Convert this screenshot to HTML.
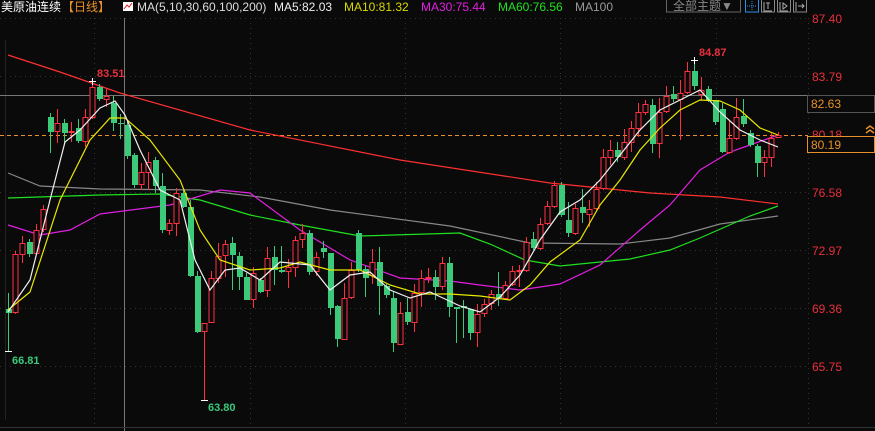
<!DOCTYPE html>
<html><head><meta charset="utf-8"><style>
html,body{margin:0;padding:0;background:#0a0a0a;width:875px;height:431px;overflow:hidden}
svg{display:block}
text{font-family:"Liberation Sans","Noto Sans CJK SC",sans-serif}
</style></head><body>
<svg id="s" width="875" height="431" xmlns="http://www.w3.org/2000/svg">
<rect width="875" height="431" fill="#0a0a0a"/>
<g stroke="#333" stroke-dasharray="1,4" stroke-width="1">
<line x1="0" y1="18.5" x2="808" y2="18.5"/><line x1="0" y1="76.5" x2="808" y2="76.5"/>
<line x1="0" y1="192.5" x2="808" y2="192.5"/><line x1="0" y1="250.5" x2="808" y2="250.5"/>
<line x1="0" y1="308.5" x2="808" y2="308.5"/><line x1="0" y1="366.5" x2="808" y2="366.5"/>
<line x1="94.5" y1="18" x2="94.5" y2="427"/><line x1="250.5" y1="18" x2="250.5" y2="427"/>
<line x1="405.5" y1="18" x2="405.5" y2="427"/><line x1="560.5" y1="18" x2="560.5" y2="427"/>
<line x1="716.5" y1="18" x2="716.5" y2="427"/>
<line x1="808.5" y1="18" x2="808.5" y2="427"/>
</g>
<line x1="5.5" y1="40" x2="5.5" y2="420" stroke="#222"/>
<line x1="124.5" y1="18" x2="124.5" y2="431" stroke="#777"/>
<line x1="0" y1="95.5" x2="808" y2="95.5" stroke="#777"/>
<line x1="0" y1="135.5" x2="808" y2="135.5" stroke="#e8902a" stroke-dasharray="4,3"/>
<line x1="0" y1="427.5" x2="875" y2="427.5" stroke="#333"/>
<g id="ma" fill="none" stroke-width="1.2"></g>
<g id="cs"></g>
<g id="mb" fill="none" stroke-width="1.2"></g>
<!-- labels -->
<g font-size="12" fill="#e8303c">
<text x="812" y="23">87.40</text><text x="812" y="81">83.79</text>
<text x="812" y="139" fill="#e8303c">80.18</text>
<text x="812" y="197">76.58</text><text x="812" y="255">72.97</text>
<text x="812" y="313">69.36</text><text x="812" y="371">65.75</text>
</g>
<rect x="807.5" y="95.5" width="67" height="17" fill="#0a0a0a" stroke="#555"/>
<text x="811" y="108" font-size="12" fill="#e8902a">82.63</text>
<rect x="807.5" y="136.5" width="67" height="16" fill="#0a0a0a" stroke="#e8902a"/>
<text x="811" y="149" font-size="12" fill="#e8902a">80.19</text>
<path d="M866 129l4-3 4 3M866 133l4-3 4 3" stroke="#e8902a" fill="none" stroke-width="1.5"/>
<g font-size="11" font-weight="bold">
<text x="97" y="77" fill="#e8303c">83.51</text>
<text x="699" y="56" fill="#e8303c">84.87</text>
<text x="12" y="364" fill="#3bc97a">66.81</text>
<text x="208" y="411" fill="#3bc97a">63.80</text>
</g>
<g stroke="#fff" stroke-width="1">
<line x1="89" y1="81.5" x2="96" y2="81.5"/><line x1="92.5" y1="78" x2="92.5" y2="85"/>
<line x1="691" y1="60.5" x2="698" y2="60.5"/><line x1="694.5" y1="57" x2="694.5" y2="64"/>
<line x1="5" y1="351.5" x2="12" y2="351.5"/>
<line x1="201" y1="400.5" x2="208" y2="400.5"/>
</g>
<!-- top bar -->
<rect x="0" y="0" width="875" height="14" fill="#0a0a0a"/>
<text x="1" y="11" font-size="12" fill="#fff">美原油连续</text>
<text x="62" y="11" font-size="12" fill="#e8902a">【日线】</text>
<rect x="123" y="2" width="10" height="9" fill="#fff"/>
<path d="M124 9l3-4 2 2 3-4" stroke="#d22" fill="none"/>
<text x="137" y="11" font-size="12" fill="#ddd">MA(5,10,30,60,100,200)</text>
<text x="274" y="11" font-size="12" fill="#eee">MA5:82.03</text>
<text x="344" y="11" font-size="12" fill="#d8d800">MA10:81.32</text>
<text x="421" y="11" font-size="12" fill="#e020e0">MA30:75.44</text>
<text x="498" y="11" font-size="12" fill="#20e020">MA60:76.56</text>
<text x="575" y="11" font-size="12" fill="#999">MA100</text>
<rect x="666.5" y="-1" width="74" height="13" fill="none" stroke="#666"/>
<text x="673" y="10" font-size="12" fill="#888">全部主题▼</text>
<rect x="745.5" y="-1" width="13" height="13" fill="none" stroke="#2a8fe8"/>
<path d="M752 1v10M747 6h10" stroke="#2a8fe8" stroke-dasharray="1,1"/>
<rect x="761.5" y="-1" width="13" height="13" fill="none" stroke="#888"/>
<path d="M764 2v9h8M766 3h4M768 3v6" stroke="#aaa" fill="none"/>
<rect x="777.5" y="-1" width="13" height="13" fill="none" stroke="#888"/>
<path d="M780 2v9h8M783 3l4 3-4 3z" stroke="#aaa" fill="none"/>
<rect x="793.5" y="-1" width="13" height="13" fill="none" stroke="#888"/>
<path d="M796 2v9M798 6h6M802 4l2 2-2 2" stroke="#aaa" fill="none"/>
</svg>
<script>
var D=[
[309,313,293,352,'g'],[254,312,251,314,'r'],[243,254,236,263,'r'],[242,254,239,257,'g'],[230,253,224,255,'r'],[209,229,205,232,'r'],
[117,132,113,153,'g'],[123,131,109,143,'r'],[123,133,119,143,'g'],[131,132,122,142,'r'],[128,141,119,143,'g'],[117,141,109,147,'r'],
[87,117,81,119,'r'],[87,99,84,101,'g'],[96,99,88,107,'r'],[103,123,96,131,'g'],[123,124,114,139,'g'],[125,156,121,159,'g'],
[155,185,153,188,'g'],[172,184,163,190,'r'],[162,172,152,190,'r'],[160,186,157,193,'g'],[186,230,173,233,'g'],[223,230,219,235,'r'],
[193,223,188,236,'r'],[193,207,190,208,'g'],[207,276,200,277,'g'],[276,332,271,333,'g'],[323,331,323,400,'r'],[278,322,271,323,'r'],
[256,278,243,283,'r'],[244,255,240,277,'r'],[243,255,237,290,'g'],[256,277,252,290,'g'],[277,300,273,300,'g'],[273,299,267,308,'r'],
[280,292,278,293,'g'],[258,290,247,297,'r'],[257,270,246,285,'g'],[270,272,246,273,'g'],[267,271,259,288,'r'],[240,267,236,277,'r'],
[233,239,224,248,'r'],[233,272,230,275,'g'],[257,271,252,276,'r'],[248,252,241,258,'g'],[253,308,253,315,'g'],[306,339,305,347,'g'],
[298,339,283,340,'r'],[270,297,262,299,'r'],[233,270,230,272,'g'],[269,278,266,297,'g'],[262,275,249,284,'r'],[262,286,247,315,'g'],
[286,295,284,298,'g'],[298,343,291,352,'g'],[313,344,302,345,'r'],[312,322,298,325,'g'],[293,322,284,332,'r'],[278,292,270,307,'r'],
[277,278,268,283,'r'],[277,287,270,300,'g'],[263,286,257,290,'r'],[263,307,257,317,'g'],[307,309,307,343,'g'],[306,308,300,338,'g'],
[309,333,309,340,'g'],[314,332,304,347,'r'],[304,313,299,317,'r'],[294,303,290,310,'r'],[294,298,272,306,'g'],[285,298,281,300,'r'],
[271,284,266,286,'r'],[270,271,265,287,'r'],[242,270,237,272,'r'],[239,248,232,250,'g'],[224,248,218,250,'r'],[206,223,201,225,'r'],
[185,206,181,208,'r'],[185,215,182,217,'g'],[220,233,202,237,'g'],[208,233,204,235,'r'],[207,213,189,223,'g'],[209,214,200,227,'r'],
[189,208,182,210,'r'],[157,188,149,190,'r'],[150,157,140,165,'r'],[150,157,142,162,'g'],[142,157,129,160,'r'],[128,142,121,152,'r'],
[112,128,103,137,'r'],[104,112,100,115,'r'],[105,144,99,153,'g'],[112,143,98,158,'r'],[96,111,86,113,'r'],[94,99,86,102,'g'],
[93,99,80,140,'r'],[71,92,62,94,'r'],[71,86,58,90,'g'],[90,94,77,100,'r'],[89,100,86,102,'g'],[100,122,100,125,'g'],
[109,152,103,153,'g'],[138,152,120,154,'r'],[117,138,98,140,'r'],[116,124,99,127,'g'],[133,145,130,147,'g'],[146,163,144,177,'g'],
[157,162,150,177,'r'],[138,157,132,167,'r'],[135,137,132,138,'r']];
var cs=document.getElementById('cs'),h='';
D.forEach(function(c,i){var x=8+7*i,col=c[4]=='r'?'#ff3040':'#3bc97a';
h+='<line x1="'+x+'.5" y1="'+c[2]+'" x2="'+x+'.5" y2="'+c[3]+'" stroke="'+col+'"/>';
var hh=Math.max(1,c[1]-c[0]);
if(c[4]=='r')h+='<rect x="'+(x-2)+'" y="'+c[0]+'.5" width="5" height="'+hh+'" fill="#0a0a0a" stroke="'+col+'"/>';
else h+='<rect x="'+(x-2)+'" y="'+c[0]+'" width="6" height="'+hh+'" fill="'+col+'"/>';});
cs.innerHTML=h;
function pl(pts,col){return '<polyline points="'+pts+'" stroke="'+col+'"/>';}
document.getElementById('ma').innerHTML=
pl('8,55 60,72 120,93 250,130 400,160 550,183 650,193 720,197 778,204','#ff3030')+
pl('8,173 40,186 100,189 200,190 260,197 330,210 450,226 530,243 620,244 670,238 720,224 778,216','#888')+
pl('8,198 100,195 160,194 200,200 250,215 300,225 360,236 460,233 490,244 525,260 560,266 630,259 670,250 700,238 750,216 778,206','#20e020')+
pl('8,225 40,235 70,230 100,214 170,205 220,190 250,193 300,230 350,260 400,278 450,281 480,285 520,290 560,284 600,265 640,230 670,205 700,170 730,152 750,145 778,135','#e020e0');
document.getElementById('mb').innerHTML=
pl('8,310 30,292 60,200 90,140 110,118 125,118 150,140 180,180 200,230 220,260 250,270 280,268 300,262 330,270 360,270 390,285 420,294 450,294 480,296 510,300 530,285 550,262 580,240 600,205 620,180 640,150 660,128 680,110 700,100 720,101 740,110 760,128 778,135','#e8e800')+
pl('8,312 30,280 50,200 65,142 80,130 100,108 115,101 125,115 140,150 160,190 180,200 195,260 210,290 225,270 240,268 260,280 280,262 310,265 330,290 350,275 370,272 390,290 410,298 430,292 460,306 480,312 500,297 520,275 540,240 560,212 580,200 600,180 620,155 640,130 660,110 680,100 700,90 720,112 740,130 760,140 778,147','#f0f0f0');
</script>
</body></html>
